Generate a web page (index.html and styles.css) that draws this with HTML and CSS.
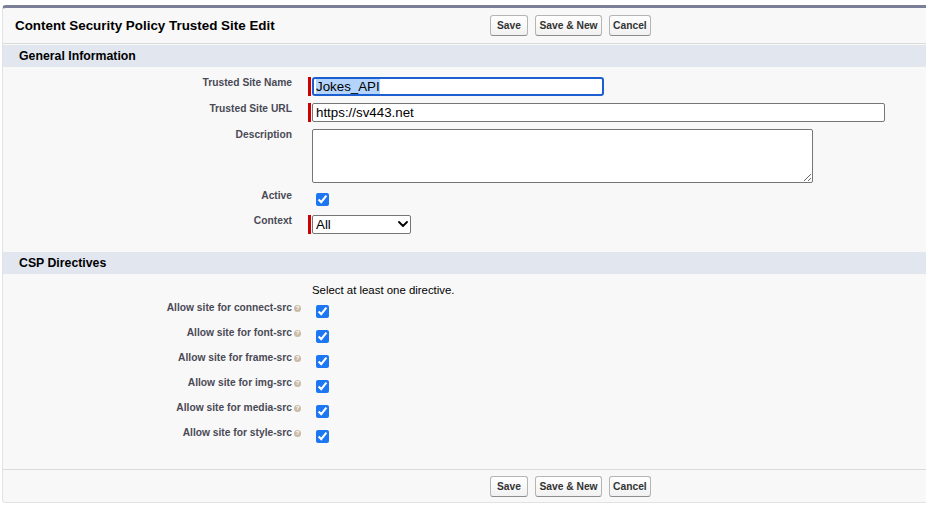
FILE: index.html
```html
<!DOCTYPE html>
<html lang="en">
<head>
<meta charset="utf-8">
<title>Content Security Policy Trusted Site Edit</title>
<link rel="stylesheet" href="styles.css">
</head>
<body>
<div class="panel">
  <div class="pb-header">
    <div class="pb-title"><h2>Content Security Policy Trusted Site Edit</h2></div>
    <div class="pb-buttons">
      <button class="btn btn-save" type="button">Save</button>
      <button class="btn" type="button">Save &amp; New</button>
      <button class="btn" type="button">Cancel</button>
    </div>
  </div>

  <h3 class="subheader first">General Information</h3>
  <div class="section general">
    <div class="row">
      <label class="label" for="name">Trusted Site Name</label>
      <div class="data req"><span class="reqbar"></span><input id="name" class="text text-name" type="text" value="Jokes_API"></div>
    </div>
    <div class="row">
      <label class="label" for="url">Trusted Site URL</label>
      <div class="data req"><span class="reqbar"></span><input id="url" class="text text-url" type="text" value="https://sv443.net"></div>
    </div>
    <div class="row">
      <label class="label" for="desc">Description</label>
      <div class="data"><textarea id="desc" class="textarea"></textarea></div>
    </div>
    <div class="row row-active">
      <label class="label" for="active">Active</label>
      <div class="data"><input id="active" class="check" type="checkbox" checked></div>
    </div>
    <div class="row row-context">
      <label class="label" for="context">Context</label>
      <div class="data req"><span class="reqbar"></span>
        <span class="selectwrap">
          <select id="context" class="select"><option>All</option></select>
          <svg class="chev" width="10" height="6" viewBox="0 0 10 6"><path d="M1 1 L5 5 L9 1" fill="none" stroke="#000" stroke-width="1.8" stroke-linecap="round" stroke-linejoin="round"/></svg>
        </span>
      </div>
    </div>
  </div>

  <h3 class="subheader">CSP Directives</h3>
  <div class="section csp">
    <div class="row row-note">
      <div class="label"></div>
      <div class="data note">Select at least one directive.</div>
    </div>
    <div class="row directive">
      <label class="label label-help" for="d1">Allow site for connect-src<span class="help">?</span></label>
      <div class="data"><input id="d1" class="check" type="checkbox" checked></div>
    </div>
    <div class="row directive">
      <label class="label label-help" for="d2">Allow site for font-src<span class="help">?</span></label>
      <div class="data"><input id="d2" class="check" type="checkbox" checked></div>
    </div>
    <div class="row directive">
      <label class="label label-help" for="d3">Allow site for frame-src<span class="help">?</span></label>
      <div class="data"><input id="d3" class="check" type="checkbox" checked></div>
    </div>
    <div class="row directive">
      <label class="label label-help" for="d4">Allow site for img-src<span class="help">?</span></label>
      <div class="data"><input id="d4" class="check" type="checkbox" checked></div>
    </div>
    <div class="row directive">
      <label class="label label-help" for="d5">Allow site for media-src<span class="help">?</span></label>
      <div class="data"><input id="d5" class="check" type="checkbox" checked></div>
    </div>
    <div class="row directive">
      <label class="label label-help" for="d6">Allow site for style-src<span class="help">?</span></label>
      <div class="data"><input id="d6" class="check" type="checkbox" checked></div>
    </div>
  </div>

  <div class="pb-bottom">
    <div class="pb-spacer"></div>
    <div class="pb-buttons">
      <button class="btn btn-save" type="button">Save</button>
      <button class="btn" type="button">Save &amp; New</button>
      <button class="btn" type="button">Cancel</button>
    </div>
  </div>
</div>
<script src="script.js"></script>
</body>
</html>
```

FILE: styles.css
```css
* { box-sizing: border-box; }
html, body { margin: 0; background: #fff; }
body {
  padding: 5px 0 0 2px;
  font-family: "Liberation Sans", Arial, Helvetica, sans-serif;
  overflow: hidden;
  color: #000;
}
.panel {
  margin-right: -8px;
  background: #f8f8f8;
  border: 1px solid #e0e3e5;
  border-top: 3px solid #7b7f97;
  border-radius: 4px;
}
.pb-header {
  display: flex;
  align-items: center;
  height: 36px;
  border-bottom: 1px solid #dadada;
}
.pb-title { width: 487px; flex: none; padding-left: 12px; }
.pb-title h2 {
  margin: 0;
  font-size: 13.4px;
  font-weight: bold;
  line-height: 16px;
  color: #000;
}
.pb-buttons { display: flex; gap: 7.5px; }
.btn {
  height: 21px;
  padding: 0 3px;
  font-family: "Liberation Sans", Arial, sans-serif;
  font-size: 10.25px;
  font-weight: bold;
  line-height: 19px;
  color: #333;
  border: 1px solid #b5b5b5;
  border-bottom-color: #8c8c8c;
  border-radius: 3px;
  background: linear-gradient(#ffffff, #f1f1f1);
}
.btn-save { padding: 0 6px; }
.subheader {
  margin: 1px 0 0 0;
  height: 22px;
  padding: 0 0 0 16px;
  background: #e1e6ef;
  font-size: 12.3px;
  font-weight: bold;
  line-height: 22px;
  color: #000;
}
.section.general { padding: 9px 0 17px; }
.section.csp { padding: 9px 0 23px; }
.row { display: flex; align-items: flex-start; }
.general .row + .row { margin-top: 6px; }
.general .row-active { margin-top: 5px; }
.label {
  width: 299px;
  flex: none;
  padding: 1px 10px 0 0;
  text-align: right;
  font-size: 10.25px;
  font-weight: bold;
  line-height: 12px;
  color: #4a4a56;
}
.label-help { padding-right: 1px; }
.help {
  display: inline-block;
  width: 7px;
  height: 7px;
  margin-left: 2px;
  border-radius: 50%;
  background: #c9bba6;
  color: #fff;
  font-size: 6px;
  line-height: 7px;
  text-align: center;
  vertical-align: 1px;
}
.data {
  margin-left: 6px;
  padding-top: 1px;
  padding-left: 4px;
  display: flex;
  align-items: flex-start;
}
.data.req { padding-left: 0; }
.reqbar {
  width: 3px;
  height: 19px;
  margin-right: 1px;
  background: #c00;
  flex: none;
}
.text {
  height: 19px;
  padding: 0 3px;
  font-family: "Liberation Sans", Arial, sans-serif;
  font-size: 13.33px;
  color: #000;
  background: #fff;
  border: 1px solid #767676;
  border-radius: 2px;
  outline: none;
}
.text-name {
  width: 292px;
  padding: 0 2px;
  border: 2px solid #1b5fd0;
  border-radius: 3px;
}
.text-name::selection { background: #b4d4fb; color: #000; }
.text-url { width: 573px; }
.textarea {
  display: block;
  width: 501px;
  height: 54px;
  margin: 0;
  font-family: "Liberation Sans", Arial, sans-serif;
  font-size: 13.33px;
  background: #fff;
  border: 1px solid #767676;
  border-radius: 2px;
}
.check {
  width: 13px;
  height: 13px;
  margin: 3px 3px 2px 4px;
  accent-color: #1d76f2;
}
.directive .check { margin-bottom: 3px; }
.selectwrap { position: relative; display: block; height: 19px; }
.select {
  display: block;
  appearance: none;
  -webkit-appearance: none;
  width: 99px;
  height: 19px;
  margin: 0;
  padding: 0 0 0 3px;
  font-family: "Liberation Sans", Arial, sans-serif;
  font-size: 13.33px;
  color: #000;
  background: #fff;
  border: 1px solid #767676;
  border-radius: 2px;
}
.chev { position: absolute; right: 3px; top: 6px; pointer-events: none; }
.row-note { margin-bottom: 4px; }
.note {
  padding-top: 0;
  padding-left: 4px;
  font-size: 11.4px;
  line-height: 14px;
  color: #000;
}
.directive + .directive { margin-top: 5px; }
.pb-bottom {
  display: flex;
  align-items: center;
  padding: 6px 0 5px;
  border-top: 1px solid #dadada;
}
.pb-spacer { width: 487px; flex: none; }
```

FILE: script.js
```js
var nameInput = document.getElementById('name');
nameInput.focus();
nameInput.setSelectionRange(0, nameInput.value.length);
```
